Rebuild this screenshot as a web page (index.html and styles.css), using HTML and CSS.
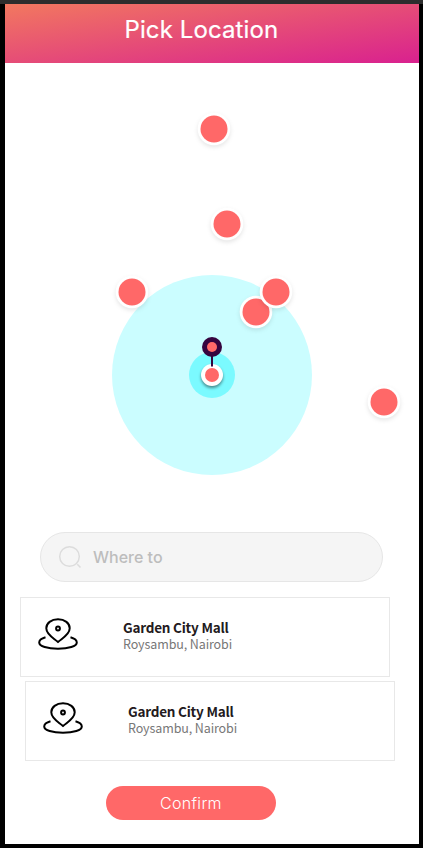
FILE: index.html
```html
<!DOCTYPE html>
<html lang="en">
<head>
<meta charset="utf-8">
<title>Pick Location</title>
<link rel="stylesheet" href="styles.css">
</head>
<body>
<svg class="defs" aria-hidden="true">
  <symbol id="place" viewBox="0 0 40 32">
    <g fill="none" stroke="#000" stroke-width="2">
      <path d="M20 24C16 20.3 8.300 16.800 8.300 10.300C8.300 5.200 13.200 1.300 20 1.300S31.700 5.200 31.700 10.300C31.700 16.800 24 20.300 20 24Z" stroke-linejoin="miter"/>
      <circle cx="20" cy="10.500" r="1.900"/>
      <path d="M7.500 19.300C3.500 20.500 1.200 22.300 1.200 24.400C1.200 28.200 9.500 30.800 20 30.800S38.800 28.200 38.800 24.400C38.800 22.300 36.500 20.500 32.500 19.300"/>
    </g>
  </symbol>
</svg>
<main class="screen">
  <header class="header"><h1>Pick Location</h1></header>
  <section class="map">
    <svg width="414" height="469" viewBox="0 0 414 469">
      <circle cx="207" cy="312" r="100" fill="#cbfdff"/>
      <circle cx="207" cy="312" r="23" fill="#7bfaff"/>
      <g class="marker"><circle cx="209" cy="66" r="16.300"/><circle class="dot" cx="209" cy="66" r="13.500"/></g>
      <g class="marker"><circle cx="222" cy="161" r="16.300"/><circle class="dot" cx="222" cy="161" r="13.500"/></g>
      <g class="marker"><circle cx="127" cy="229" r="16.300"/><circle class="dot" cx="127" cy="229" r="13.500"/></g>
      <g class="marker"><circle cx="251" cy="249" r="16.300"/><circle class="dot" cx="251" cy="249" r="13.500"/></g>
      <g class="marker"><circle cx="271" cy="229" r="16.300"/><circle class="dot" cx="271" cy="229" r="13.500"/></g>
      <g class="marker"><circle cx="379" cy="339" r="16.300"/><circle class="dot" cx="379" cy="339" r="13.500"/></g>
      <g class="marker current"><circle cx="207" cy="312" r="11"/><circle class="dot" cx="207" cy="312" r="7"/></g>
      <path d="M207 292V303.500" stroke="#35043f" stroke-width="2"/>
      <circle cx="207" cy="284" r="10" fill="#35043f"/>
      <circle class="dot" cx="207" cy="284" r="5"/>
    </svg>
  </section>
  <div class="search">
    <svg width="24" height="24" viewBox="0 0 24 24" fill="none" stroke="#dcdcdc" stroke-width="1.500"><circle cx="11.500" cy="11.500" r="9.800"/><path d="M19.300 19.300L22.500 22.500"/></svg>
    <span>Where to</span>
  </div>
  <div class="places">
    <article class="place">
      <svg class="place-icon"><use href="#place"/></svg>
      <div><h2>Garden City Mall</h2><p>Roysambu, Nairobi</p></div>
    </article>
    <article class="place shifted">
      <svg class="place-icon"><use href="#place"/></svg>
      <div><h2>Garden City Mall</h2><p>Roysambu, Nairobi</p></div>
    </article>
  </div>
  <button class="confirm">Confirm</button>
</main>
</body>
</html>
```
FILE: styles.css
```css
* { box-sizing: border-box; }
body {
  margin: 0;
  height: 848px;
  padding: 0 4px 4px 5px;
  background: #000;
  border-top: 4px solid #2d2d2d;
  font-family: Inter, sans-serif;
  overflow: hidden;
}
.defs { display: none; }
.screen {
  width: 414px;
  height: 840px;
  background: #fff;
  display: flex;
  flex-direction: column;
}
.header {
  height: 59px;
  flex: none;
  padding: 11px 0 0 119.500px;
  background: linear-gradient(to bottom right, #f2785f, #d9218f);
}
h1 {
  margin: 0;
  color: #fff;
  font-size: 24px;
  font-weight: 400;
  line-height: 30px;
  letter-spacing: 0.1px;
  -webkit-text-stroke: 0.2px #fff;
  white-space: nowrap;
}
.map { height: 469px; flex: none; }
.map svg { display: block; }
.marker { fill: #fff; filter: drop-shadow(0 2px 2px rgba(0, 0, 0, 0.1)); }
.current { filter: drop-shadow(0 2px 1.5px rgba(0, 0, 0, 0.45)); }
.dot { fill: #ff6868; }
.search {
  width: 343px;
  height: 50px;
  flex: none;
  margin-left: 35px;
  padding-left: 17px;
  display: flex;
  align-items: center;
  gap: 11px;
  border: 1px solid #e6e6e6;
  border-radius: 25px;
  background: #f5f5f5;
  color: #bdbdbd;
  font-size: 16px;
  font-weight: 500;
}
.places {
  margin: 15px 0 0 15px;
  display: flex;
  flex-direction: column;
  gap: 4px;
}
.place {
  width: 370px;
  height: 80px;
  padding: 20px 0 0 17px;
  display: flex;
  gap: 45px;
  border: 1px solid #e8e8e8;
  font-family: "Noto Sans CJK SC", sans-serif;
}
.shifted { margin-left: 5px; }
.place-icon { width: 40px; height: 32px; flex: none; margin-top: 0.4px; }
.place h2 {
  margin: 0;
  color: #231a20;
  font-size: 13.5px;
  font-weight: 700;
  line-height: 18px;
  letter-spacing: -0.22px;
  white-space: nowrap;
}
.place p {
  margin: 0;
  color: #777;
  font-size: 12.5px;
  line-height: 16px;
  letter-spacing: -0.11px;
  white-space: nowrap;
}
.confirm {
  width: 170px;
  height: 34px;
  margin: 25px 0 0 101px;
  padding: 0;
  border: 0;
  border-radius: 17px;
  background: #ff6868;
  color: #fff;
  font-family: Inter, sans-serif;
  font-size: 16px;
  font-weight: 300;
  letter-spacing: 0.3px;
}
```
